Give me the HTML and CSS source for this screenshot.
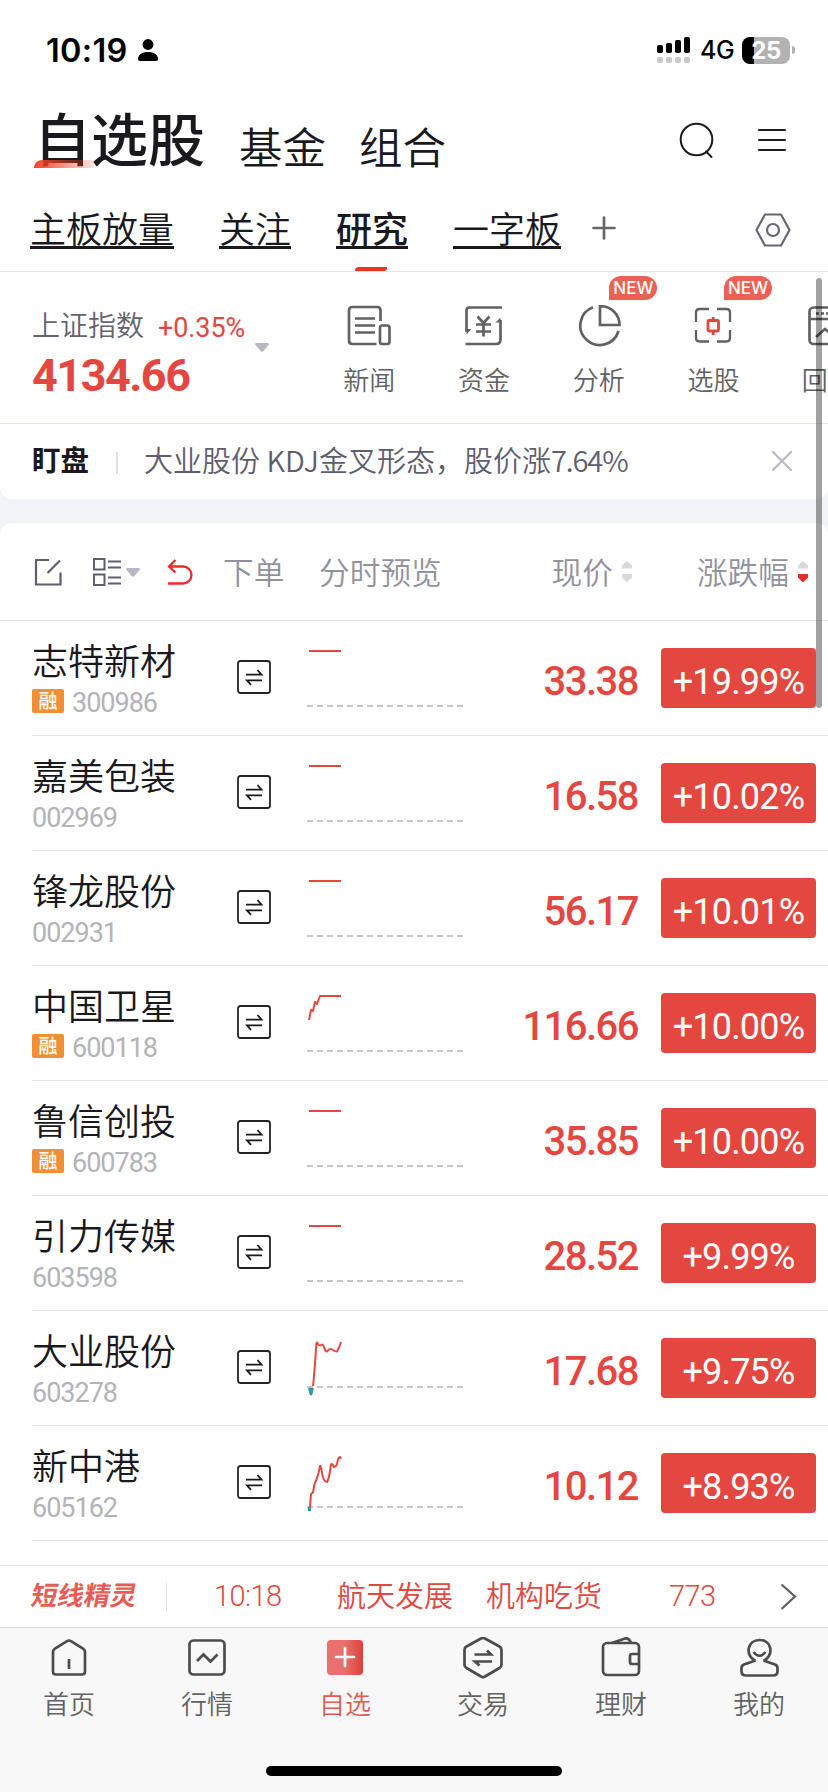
FILE: index.html
```html
<!DOCTYPE html>
<html lang="zh-CN">
<head>
<meta charset="utf-8">
<title>自选股</title>
<link rel="stylesheet" href="styles.css">
</head>
<body>
<svg width="0" height="0" class="defs">
  <symbol id="swap" viewBox="0 0 34 34"><rect x="1" y="1" width="32" height="32" rx="2.5" fill="none" stroke="#222227" stroke-width="1.8"/><path d="M9 14.6H24.5L20.5 10M25 20.4H10L14 24.8" fill="none" stroke="#19191e" stroke-width="1.8"/></symbol>
  <symbol id="flat" viewBox="0 0 156 80"><path d="M2 17H34" fill="none" stroke="#e4473f" stroke-width="2"/><path d="M0 72H156" stroke="#c6c6c8" stroke-width="2" stroke-dasharray="6 4"/></symbol>
</svg>
<div class="screen">
  <header class="status">
    <span class="time">10:19</span>
    <svg class="person" width="22" height="24" viewBox="0 0 22 24"><circle cx="11" cy="6.5" r="5.4"/><path d="M1 21C1 16.500 5.500 14 11 14s10 2.500 10 7q0 2-2 2H3q-2 0-2-2Z"/></svg>
    <span class="grow"></span>
    <svg width="34" height="26" viewBox="0 0 34 26"><rect y="8" width="6" height="8" rx="1.800"/><rect x="9" y="6" width="6" height="10" rx="1.800"/><rect x="18" y="3" width="6" height="13" rx="1.800"/><rect x="27" width="6" height="16" rx="1.800"/><g fill="#c9c9c9"><rect y="20" width="6" height="6" rx="1.800"/><rect x="9" y="20" width="6" height="6" rx="1.800"/><rect x="18" y="20" width="6" height="6" rx="1.800"/><rect x="27" y="20" width="6" height="6" rx="1.800"/></g></svg>
    <span class="net">4G</span>
    <span class="battery">25</span>
    <span class="nub"></span>
  </header>

  <nav class="top">
    <h1>自选股</h1>
    <span class="t2">基金</span>
    <span class="t2">组合</span>
    <span class="grow"></span>
    <svg class="search" width="36" height="38" viewBox="0 0 36 38" fill="none" stroke="#19191e" stroke-width="2"><circle cx="17.500" cy="17.500" r="15.800"/><path d="M27 29.500 32.500 35" stroke-linecap="round"/></svg>
    <svg class="menu" width="28" height="24" viewBox="0 0 28 24" stroke="#19191e" stroke-width="2" stroke-linecap="round"><path d="M1 2H27M1 12H27M1 22H27"/></svg>
  </nav>

  <nav class="groups">
    <span class="g">主板放量</span>
    <span class="g">关注</span>
    <span class="g on">研究</span>
    <span class="g">一字板</span>
    <svg class="plus" width="24" height="24" viewBox="0 0 24 24" stroke="#66666a" stroke-width="2.700" stroke-linecap="round"><path d="M1.500 12H22.500M12 1.500V22.500"/></svg>
    <span class="grow"></span>
    <svg class="hex" width="36" height="34" viewBox="0 0 36 34" fill="none" stroke="#666674" stroke-width="2.200" stroke-linejoin="round"><path d="M10 1.500H26L34.500 17 26 32.500H10L1.500 17Z"/><circle cx="18" cy="17" r="6"/></svg>
  </nav>

  <section class="tools">
    <div class="index">
      <div class="line"><span class="iname">上证指数</span><span class="ichg">+0.35%</span></div>
      <div class="ival">4134.66</div>
      <svg class="drop" width="14" height="9" viewBox="0 0 14 9"><path d="M1 0H13Q14.500 1 13.500 2L8.500 8Q7 9.500 5.500 8L.5 2Q-.5 1 1 0Z" fill="#b9b9c5"/></svg>
    </div>
    <div class="tool"><svg width="44" height="42" viewBox="0 0 44 42" fill="none" stroke="#626262" stroke-width="2.700"><path d="M29.500 39H5.500Q2 39 2 35.500V5.500Q2 2 5.500 2H30Q33.500 2 33.500 5.500V16M8 13.500H28M8 20.500H28M8 27.500H28"/><rect x="33" y="20.500" width="9.500" height="18.500" rx="2.200"/></svg><span>新闻</span></div>
    <div class="tool"><svg width="44" height="42" viewBox="0 0 44 42" fill="none" stroke="#626262" stroke-width="2.700"><path d="M40 2.500H7.500Q4.500 2.500 4.500 5.500V27M3.500 39H34Q38.500 39 38.500 34.500V15"/><path d="M4.500 24H9.500L4.500 29.500ZM38.500 17.500H33.500L38.500 12.500Z" fill="#626262" stroke="none"/><path d="M15.500 11.500 21.500 18 27.500 11.500M21.500 18V31.500M14 19.500H29M14 26.500H29"/></svg><span>资金</span></div>
    <div class="tool"><svg width="44" height="42" viewBox="0 0 44 42" fill="none" stroke="#626262" stroke-width="2.700"><path d="M16 2.200A19.500 19.500 0 1 0 41.500 26"/><path d="M23 1.300A18.500 18.500 0 0 1 42.500 20H23Z"/></svg><span>分析</span><b class="new">NEW</b></div>
    <div class="tool"><svg width="44" height="42" viewBox="0 0 44 42" fill="none" stroke="#626262" stroke-width="2.300"><path d="M5 17V7.500Q5 4 8.500 4H18M26 4H35.500Q39 4 39 7.500V17M39 25V33Q39 36.500 35.500 36.500H26M18 36.500H8.500Q5 36.500 5 33V25"/><g stroke="#e4473f" stroke-width="2.800"><rect x="17" y="15.500" width="10.500" height="10.500" rx="1"/><path d="M22.200 12V15.500M22.200 26V30"/></g></svg><span>选股</span><b class="new">NEW</b></div>
    <div class="tool last"><svg width="44" height="42" viewBox="0 0 44 42" fill="none" stroke="#626262" stroke-width="2.700"><rect x="2.500" y="2.500" width="38" height="36.500" rx="4"/><path d="M2.500 14H40M9 32 18 24 25 30 35 20"/><path d="M9 8.500H36" stroke-dasharray="3 2"/></svg><span>回</span></div>
  </section>

  <section class="alert">
    <b>盯盘</b><i></i><span class="msg">大业股份 <span class="kdj">KDJ</span>金叉形态，股价涨<span class="pct">7.64%</span></span>
    <em class="grow"></em>
    <svg class="close" width="20" height="20" viewBox="0 0 20 20" stroke="#b9b9c3" stroke-width="2.200" stroke-linecap="round"><path d="M1 1 19 19M19 1 1 19"/></svg>
  </section>

  <main class="card">
    <div class="head">
      <svg class="h-edit" width="28" height="28" viewBox="0 0 28 28" fill="none" stroke="#5e5e6e" stroke-width="2.200"><path d="M15 2H2V26.500H26.500V14.500M13.500 15 26 2.500"/></svg>
      <svg class="h-grid" width="28" height="28" viewBox="0 0 28 28" fill="none" stroke="#5e5e6e" stroke-width="2"><rect x="1" y="1" width="10.500" height="10.500"/><rect x="1" y="16.500" width="10.500" height="10.500"/><path d="M15 3.500H28M15 9.500H28M15 19.500H28M15 25.500H28"/></svg>
      <svg class="h-tri" width="14" height="9" viewBox="0 0 14 9"><path d="M1 0H13Q14.500 1 13.500 2L8.500 8Q7 9.500 5.500 8L.5 2Q-.5 1 1 0Z" fill="#b9b9c5"/></svg>
      <svg class="h-undo" width="26" height="26" viewBox="0 0 26 26" fill="none" stroke="#ee2b2b" stroke-width="2.300"><path d="M8.500 1 2 7.500 8.500 13.500M2.500 7.500H16A8.500 8.500 0 0 1 16 24.500H1"/></svg>
      <span class="h-order">下单</span>
      <span class="h-chart">分时预览</span>
      <span class="grow"></span>
      <span class="h-price">现价</span>
      <svg class="sort" width="10" height="22" viewBox="0 0 10 22" fill="#dadada"><path d="M5 0 10 4.500V7.500H0V4.500ZM0 13H10V16.500L5 21.500 0 16.500Z"/></svg>
      <span class="h-chg">涨跌幅</span>
      <svg class="sort end" width="10" height="22" viewBox="0 0 10 22"><path d="M5 0 10 4.500V7.500H0V4.500Z" fill="#dadada"/><path d="M0 13H10V16.500L5 21.500 0 16.500Z" fill="#ee2b2b"/></svg>
    </div>

    <div class="row"><div class="who"><div class="name">志特新材</div><div class="code"><b>融</b><span>300986</span></div></div><svg class="swap"><use href="#swap"/></svg><svg class="chart"><use href="#flat"/></svg><div class="price">33.38</div><div class="pill">+19.99%</div></div>
    <div class="row"><div class="who"><div class="name">嘉美包装</div><div class="code"><span>002969</span></div></div><svg class="swap"><use href="#swap"/></svg><svg class="chart"><use href="#flat"/></svg><div class="price">16.58</div><div class="pill">+10.02%</div></div>
    <div class="row"><div class="who"><div class="name">锋龙股份</div><div class="code"><span>002931</span></div></div><svg class="swap"><use href="#swap"/></svg><svg class="chart"><use href="#flat"/></svg><div class="price">56.17</div><div class="pill">+10.01%</div></div>
    <div class="row"><div class="who"><div class="name">中国卫星</div><div class="code"><b>融</b><span>600118</span></div></div><svg class="swap"><use href="#swap"/></svg><svg class="chart" viewBox="0 0 156 80"><path class="up" d="M2 41 4 31 6 32 8 23 10 25 13 17H34"/><path class="base" d="M0 72H156"/></svg><div class="price">116.66</div><div class="pill">+10.00%</div></div>
    <div class="row"><div class="who"><div class="name">鲁信创投</div><div class="code"><b>融</b><span>600783</span></div></div><svg class="swap"><use href="#swap"/></svg><svg class="chart"><use href="#flat"/></svg><div class="price">35.85</div><div class="pill">+10.00%</div></div>
    <div class="row"><div class="who"><div class="name">引力传媒</div><div class="code"><span>603598</span></div></div><svg class="swap"><use href="#swap"/></svg><svg class="chart"><use href="#flat"/></svg><div class="price">28.52</div><div class="pill">+9.99%</div></div>
    <div class="row"><div class="who"><div class="name">大业股份</div><div class="code"><span>603278</span></div></div><svg class="swap"><use href="#swap"/></svg><svg class="chart" viewBox="0 0 156 80"><path class="base" d="M0 63H156"/><path class="down" d="M2.500 64 4 70 5.500 64"/><path class="up" d="M6 62C8 45 8.500 30 9.500 19Q10 17.500 11 20Q12.500 22.500 15 20.500Q16.500 21 17 23Q18.500 28 20 27.500Q22.500 24 25 25.500Q29 28 30 27.500Q32.500 23 34 18"/></svg><div class="price">17.68</div><div class="pill">+9.75%</div></div>
    <div class="row"><div class="who"><div class="name">新中港</div><div class="code"><span>605162</span></div></div><svg class="swap"><use href="#swap"/></svg><svg class="chart" viewBox="0 0 156 80"><path class="base" d="M0 68H156"/><path class="down" d="M2.500 72V68"/><path class="up" d="M3 68 4 55 6 53.500 7.500 45Q10.500 40 13 27Q13.500 26 14.500 31Q16 43 20 43Q22 41 24 25.500Q25 24 27 28Q29.500 27 30 25.500Q31 18 33 18L34 20"/></svg><div class="price">10.12</div><div class="pill">+8.93%</div></div>
  </main>

  <section class="ticker">
    <b class="brand">短线精灵</b><i></i><span class="tm">10:18</span><span class="st">航天发展</span><span class="ev">机构吃货</span><span class="qty">773</span>
    <em class="grow"></em>
    <svg width="17" height="28" viewBox="0 0 17 28" fill="none" stroke="#606064" stroke-width="2.200"><path d="M1.500 1.500 15 13.500 1.500 26"/></svg>
  </section>

  <nav class="tabs">
    <div><svg width="44" height="44" viewBox="0 0 44 44"><path d="M22 3.500Q23 3.500 24 4.200L36 11.500Q38 13 38 15V34.500Q38 37.500 35 37.500H9Q6 37.500 6 34.500V15Q6 13 8 11.500L20 4.200Q21 3.500 22 3.500ZM22 22V32"/></svg><span>首页</span></div>
    <div><svg width="44" height="44" viewBox="0 0 44 44"><rect x="4.500" y="3.500" width="35" height="34" rx="4"/><path d="M12 24 18.500 17.500 25.500 24.500 32.500 17.500"/></svg><span>行情</span></div>
    <div class="active"><svg width="44" height="44" viewBox="0 0 44 44"><defs><linearGradient id="rg"><stop offset=".5" stop-color="#e9706d"/><stop offset="1" stop-color="#dc4036"/></linearGradient></defs><rect x="4" y="3" width="36" height="35" rx="4" fill="url(#rg)" stroke="none"/><path d="M22 11V29M13 20H31" stroke="#fff" stroke-linecap="round"/></svg><span>自选</span></div>
    <div><svg width="44" height="44" viewBox="0 0 44 44"><path d="M20 1.500Q22 .3 24 1.500L38.500 9.500Q40.500 10.500 40.500 13V28Q40.500 30 38.500 31L24 39.500Q22 41 20 39.500L5.500 31Q3.500 30 3.500 28V13Q3.500 10.500 5.500 9.500Z"/><path d="M13.500 17.500H30L26 13.500M31 24.500H14L18.500 28.500"/></svg><span>交易</span></div>
    <div><svg width="44" height="44" viewBox="0 0 44 44"><rect x="4" y="6" width="36" height="32" rx="4"/><path d="M40 17H33Q31 17 31 19V25Q31 27 33 27H40M13 6 26 1.500Q30 .5 32 6"/></svg><span>理财</span></div>
    <div><svg width="44" height="44" viewBox="0 0 44 44"><path d="M18.500 24C7 17 11 3 22.500 3S38 17 26.500 24M18.500 23.500 7 27.500Q4.500 28.500 4.500 31V34Q4.500 38.500 9 38.500H36Q40.500 38.500 40.500 34V31Q40.500 28.500 38 27.500L26.500 23.500M16.500 15Q22.500 22.500 28.500 15"/></svg><span>我的</span></div>
  </nav>
  <div class="home"><span></span></div>
  <div class="scrollbar"></div>
</div>
</body>
</html>
```
FILE: styles.css
```css
* { box-sizing: border-box; }
body {
  margin: 0;
  background: #fff;
  color: #19191e;
  font-family: "Noto Sans CJK SC", sans-serif;
}
svg { display: block; flex: none; }
i, em { font-style: normal; }
.defs { position: absolute; }
.grow { flex: 1; }
.screen {
  position: relative;
  width: 828px;
  height: 1792px;
  overflow: hidden;
  display: flex;
  flex-direction: column;
  background: #f2f3f8;
}
.status, .top, .groups, .tools, .alert, .ticker { display: flex; flex: none; background: #fff; white-space: nowrap; }

.status { height: 100px; align-items: center; padding: 0 33px 0 46px; font-family: Inter, sans-serif; color: #000; }
.time { font-size: 32.500px; font-weight: 600; width: 91px; letter-spacing: .3px; }
.net { font-size: 25px; font-weight: 500; width: 42px; margin-left: 9px; letter-spacing: -.5px; }
.battery { width: 48px; height: 27px; border-radius: 8px; background: linear-gradient(90deg, #000 12px, #b2b2b2 12px); color: #fff; font-size: 24px; font-weight: 700; line-height: 27px; text-align: center; letter-spacing: -.5px; }
.nub { width: 3px; height: 8px; margin-left: 2px; border-radius: 0 4px 4px 0; background: #b2b2b2; }

.top { height: 90px; align-items: flex-start; padding: 0 42px 0 34px; }
.top h1 { position: relative; margin: 0; font-size: 57px; font-weight: 500; line-height: 72px; width: 205px; }
.top h1::after { content: ""; position: absolute; left: 0; top: 60px; width: 60px; height: 8px; border-radius: 8px 0 0 0; background: linear-gradient(90deg, #ee4325, #ee432522); }
.t2 { font-size: 43.500px; line-height: 92px; height: 90px; width: 120px; font-weight: 350; }
.search { margin: 22px 43px 0 0; }
.menu { margin-top: 28px; }

.groups { height: 82px; padding: 13px 37px 0 30px; border-bottom: 1px solid #e4e5ec; }
.g { position: relative; height: 46px; line-height: 48px; font-size: 36px; margin-right: 45px; border-bottom: 3px solid #19191e; font-weight: 350; }
.on { font-weight: 500; }
.on::after { content: ""; position: absolute; left: 19px; top: 64px; width: 32px; height: 4px; background: #ee3324; border-radius: 4px 0 3px 0; }
.plus { margin: 13px 0 0 -14px; }
.hex { margin-top: 10px; }

.tools { height: 152px; border-bottom: 1px solid #e4e5ec; }
.index { position: relative; width: 312px; flex: none; padding: 31px 0 0 32px; color: #e4473f; }
.line { display: flex; height: 42px; line-height: 42px; }
.iname { color: #63636f; font-size: 28px; width: 126px; font-weight: 350; }
.ichg { font: 400 27px/50px Roboto, sans-serif; letter-spacing: -.1px; }
.ival { font: 700 45px/50px Roboto, sans-serif; letter-spacing: -1.500px; margin-top: 6px; }
.drop { position: absolute; left: 255px; top: 71px; }
.tool { position: relative; width: 114.700px; flex: none; display: flex; flex-direction: column; align-items: center; padding: 33px 0 0; color: #626262; font-size: 26px; font-weight: 350; }
.tool span { line-height: 36px; margin-top: 14px; }
.tool.last { align-items: flex-start; padding-left: 36px; }
.tool.last span { margin-left: -5px; }
.new { position: absolute; left: 68px; top: 4px; width: 48px; height: 24px; border-radius: 12px 12px 12px 0; background: #ec6153; color: #fff; font: 500 17px/25px Inter, sans-serif; text-align: center; }

.alert { height: 75px; align-items: center; padding: 0 36px 0 32px; border-radius: 0 0 12px 12px; font-size: 29px; color: #5e5e6e; font-weight: 350; }
.alert b { font-weight: 600; color: #19191e; width: 84px; font-size: 28.500px; line-height: 40px; margin-top: -5px; }
.alert i { width: 2px; height: 22px; background: #dedee4; margin: 3px 26px 0 0; }
.msg { line-height: 40px; margin-top: -5px; }
.pct { letter-spacing: -1.100px; }
.close { margin-top: -1px; }

.card { flex: none; height: 1042px; margin-top: 24px; background: #fff; border-radius: 12px 12px 0 0; }
.head { display: flex; align-items: center; height: 98px; padding: 1px 20px 0 34px; border-bottom: 1px solid #e4e5ec; color: #92929c; font-size: 30.700px; font-weight: 350; white-space: nowrap; }
.head span { line-height: 40px; margin-top: -2px; }
.h-grid { margin-left: 31px; }
.h-tri { margin-left: 5px; }
.h-undo { margin: 0 30px 0 27px; }
.h-order { width: 96px; }
.sort { margin: 0 65px 0 9px; }
.sort.end { margin-right: 0; }

.row { display: grid; grid-template-columns: 205px 34px 36px 156px 175px 23px 155px; height: 115px; margin-left: 32px; border-bottom: 1px solid #e4e5ec; }
.who { padding-top: 15px; white-space: nowrap; }
.name { font-size: 36px; line-height: 46px; font-weight: 350; }
.code { display: flex; height: 24px; margin-top: 7px; color: #b3b3b8; font: 400 27px/28px Roboto, sans-serif; letter-spacing: -1px; }
.code b { width: 32px; height: 24px; margin-right: 8px; border-radius: 2px; background: #f08f35; color: #fff; font: 500 19px/22px "Noto Sans CJK SC", sans-serif; letter-spacing: 0; text-align: center; }
.swap { width: 34px; height: 34px; margin-top: 39px; }
.chart { grid-column: 4; width: 156px; height: 80px; margin-top: 13px; }
.up, .down, .base { fill: none; stroke: #e4473f; stroke-width: 2; stroke-linejoin: round; }
.down { stroke: #3795a0; stroke-width: 3; }
.base { stroke: #c6c6c8; stroke-dasharray: 6 4; }
.price { color: #e4473f; text-align: right; font: 500 40px/115px Roboto, sans-serif; letter-spacing: -1.500px; padding-top: 3px; height: 114px; }
.pill { grid-column: 7; height: 60px; margin-top: 27px; border-radius: 4px; background: #e4473f; color: #fff; text-align: center; font: 400 36px/68px Roboto, sans-serif; letter-spacing: -.8px; }

.ticker { height: 62px; align-items: center; padding: 0 31px 0 32px; border-top: 1px solid #e4e5ec; color: #e4473f; font-size: 29px; font-weight: 350; }
.ticker b, .st, .ev { line-height: 40px; margin-top: -5px; }
.brand { font-size: 26.300px; font-weight: 700; transform: skewX(-10deg); width: 134px; color: #e65d58; }
.ticker i { width: 1px; height: 29px; background: #dfdfe6; }
.tm, .qty { font-family: Roboto, sans-serif; font-weight: 300; font-size: 29px; letter-spacing: -.6px; margin-top: -1px; }
.tm { width: 123px; margin-left: 47px; }
.st { width: 149px; }
.ev { width: 183px; }

.tabs { display: grid; grid-template-columns: repeat(6, 1fr); height: 114px; flex: none; background: #f8f8f8; border-top: 1px solid #dcdcdf; color: #626262; font-size: 26px; font-weight: 350; }
.tabs div { display: flex; flex-direction: column; align-items: center; padding-top: 9px; }
.tabs svg { fill: none; stroke: #4c4c4c; stroke-width: 2.700; }
.tabs span { line-height: 36px; margin-top: 4px; }
.tabs .active { color: #e05a54; }
.home { flex: 1; background: #f8f8f8; display: flex; justify-content: center; padding-top: 25px; }
.home span { width: 296px; height: 10px; border-radius: 5px; background: #000; }
.scrollbar { position: absolute; left: 816px; top: 278px; width: 6px; height: 430px; border-radius: 3px; background: rgba(0,0,0,.37); }
```
